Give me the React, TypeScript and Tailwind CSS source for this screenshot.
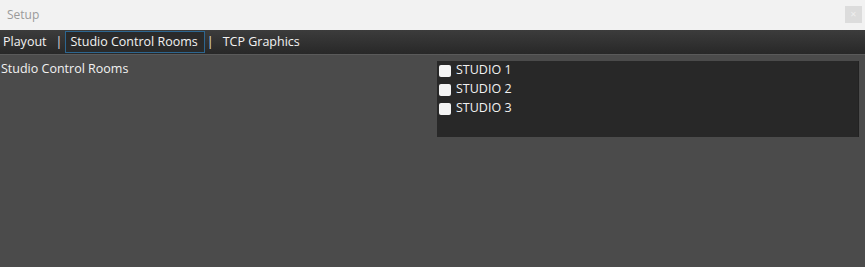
import React from 'react';

const studios = ['STUDIO 1', 'STUDIO 2', 'STUDIO 3'];

const App: React.FC = () => {
  return (
    <div
      className="w-[865px] h-[267px] flex flex-col bg-[#4b4b4b] overflow-hidden"
      style={{ fontFamily: '"Open Sans", "Noto Sans", sans-serif' }}
    >
      {/* title bar */}
      <div className="h-[30px] flex items-center justify-between bg-[#f2f2f2] pl-[7px] pr-[3px]">
        <span className="text-[12px] text-[#9a9a9a]">Setup</span>
        <div className="w-[17px] h-[17px] mt-[-2px] bg-[#dcdcdc] flex items-center justify-center">
          <span className="text-[8px] leading-none text-[#eeeeee]">✕</span>
        </div>
      </div>

      {/* tabs */}
      <div className="h-[25px] flex items-center bg-gradient-to-b from-[#3c3c3c] to-[#282828] border-b border-[#5a5a5a] text-[12.5px] text-[#f2f2f2]">
        <span className="pl-[3px]">Playout</span>
        <span className="pl-[9px] pr-[3px] text-[#e0e0e0]">|</span>
        <span className="h-[22px] flex items-center pl-[4px] pr-[6px] border border-[#2d6690] bg-[#2a2a2a]">
          Studio Control Rooms
        </span>
        <span className="pl-[2px] pr-[9px] text-[#e0e0e0]">|</span>
        <span>TCP Graphics</span>
      </div>

      {/* content */}
      <div className="flex flex-1 pt-[5px]">
        <div className="w-[437px] text-[12.5px] text-[#f2f2f2] pl-[1px]">Studio Control Rooms</div>
        <div className="w-[422px] h-[76px] mt-[1px] bg-[#282828] border-r border-[#222222] pl-[2px]">
          {studios.map((s) => (
            <label key={s} className="h-[19px] flex items-center gap-[5px] text-[12.5px] text-[#f2f2f2]">
              <span className="w-[12px] h-[12px] rounded-[2px] bg-[#f4f4f4]" />
              {s}
            </label>
          ))}
        </div>
      </div>
    </div>
  );
};

export default App;
